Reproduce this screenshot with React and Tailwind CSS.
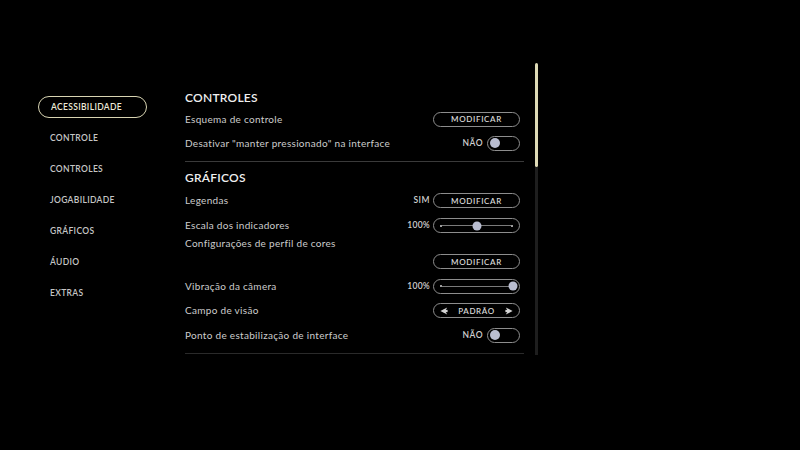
import React from "react";

const nav = ["ACESSIBILIDADE", "CONTROLE", "CONTROLES", "JOGABILIDADE", "GRÁFICOS", "ÁUDIO", "EXTRAS"];

function Pill({ children, className = "" }) {
  return (
    <div className={`flex h-[15px] w-[87px] items-center rounded-full border border-[#8d8d8d] ${className}`}>
      {children}
    </div>
  );
}

function Button({ label }) {
  return (
    <Pill className="justify-center">
      <span className="text-[8px] font-semibold tracking-[0.08em] text-[#d6d6d6]">{label}</span>
    </Pill>
  );
}

function Toggle({ label }) {
  return (
    <div className="flex items-center gap-[4px]">
      <span className="text-[8.5px] font-semibold tracking-[0.06em] text-[#cfcfcf]">{label}</span>
      <div className="flex h-[15px] w-[33px] items-center rounded-full border border-[#8d8d8d] pl-[2px]">
        <div className="h-[10px] w-[10px] rounded-full bg-[#b9bdd0]" />
      </div>
    </div>
  );
}

function Slider({ value }) {
  return (
    <div className="flex items-center gap-[3px]">
      <span className="text-[8.5px] font-semibold tracking-[0.03em] text-[#cfcfcf]">100%</span>
      <Pill className="px-[6px]">
        <div className="relative flex h-full flex-1 items-center">
          <div className="h-[2px] w-[2px] rounded-full bg-[#cfcfcf]" />
          <div className="h-px flex-1 bg-[#7a7a7a]" />
          {value < 100 && <div className="h-[2px] w-[2px] rounded-full bg-[#cfcfcf]" />}
          <div
            className="absolute top-1/2 h-[9px] w-[9px] -translate-x-1/2 -translate-y-1/2 rounded-full bg-[#b9bdd0]"
            style={{ left: `${value}%` }}
          />
        </div>
      </Pill>
    </div>
  );
}

// chunky concave arrowhead, as in the picker
function Arrow({ flip }) {
  return (
    <svg width="8" height="8" viewBox="0 0 10 10" className={flip ? "-scale-x-100" : ""}>
      <path d="M0.5 5 L9 0.5 L6.5 5 L9 9.5 Z" fill="#d4d4d4" />
      <path d="M4 3.6 H9.5 V6.4 H4 Z" fill="#d4d4d4" />
    </svg>
  );
}

function Selector({ label }) {
  return (
    <Pill className="justify-between px-[6px]">
      <Arrow />
      <span className="text-[8px] font-semibold tracking-[0.08em] text-[#d6d6d6]">{label}</span>
      <Arrow flip />
    </Pill>
  );
}

function Row({ label, h = "h-[24px]", children }) {
  return (
    <div className={`flex items-center justify-between pr-[4px] ${h}`}>
      <span className="text-[10px] tracking-[0.03em] text-[#cdcdcd]">{label}</span>
      {children}
    </div>
  );
}

function Heading({ children, pad = "" }) {
  return (
    <div className={`flex h-[20px] items-center ${pad}`}>
      <h2 className="text-[12px] font-semibold tracking-[0.02em] text-[#f0f0f0]">{children}</h2>
    </div>
  );
}

export default function App() {
  return (
    <div
      className="flex h-[450px] w-[800px] bg-black"
      style={{ fontFamily: "Lato, 'Noto Sans', sans-serif" }}
    >
      <nav className="ml-[38px] mt-[96px] flex w-[109px] flex-col gap-[9px]">
        {nav.map((n, i) => (
          <div
            key={n}
            className={`flex h-[22px] items-center rounded-full pl-[12px] text-[8.5px] font-semibold tracking-[0.04em] ${
              i === 0 ? "border border-[#d8d4b2] text-[#ecead8]" : "text-[#c6c6c6]"
            }`}
          >
            {n}
          </div>
        ))}
      </nav>

      <main className="ml-[38px] mt-[87px] flex w-[339px] flex-col">
        <Heading pad="pt-[1px]">CONTROLES</Heading>
        <Row label="Esquema de controle">
          <Button label="MODIFICAR" />
        </Row>
        <Row label={'Desativar "manter pressionado" na interface'}>
          <Toggle label="NÃO" />
        </Row>
        <div className="mb-[6px] mt-[6px] border-t border-[#3a3a3a]" />

        <Heading>GRÁFICOS</Heading>
        <Row label="Legendas" h="h-[25px]">
          <div className="flex items-center gap-[3px]">
            <span className="text-[8.5px] font-semibold tracking-[0.06em] text-[#cfcfcf]">SIM</span>
            <Button label="MODIFICAR" />
          </div>
        </Row>
        <Row label="Escala dos indicadores" h="h-[25px]">
          <Slider value={50} />
        </Row>
        <Row label="Configurações de perfil de cores" h="h-[11px]" />
        <Row label="" h="h-[25px]">
          <Button label="MODIFICAR" />
        </Row>
        <Row label="Vibração da câmera">
          <Slider value={100} />
        </Row>
        <Row label="Campo de visão" h="h-[25px]">
          <Selector label="PADRÃO" />
        </Row>
        <Row label="Ponto de estabilização de interface">
          <Toggle label="NÃO" />
        </Row>
        <div className="mt-[6px] border-t border-[#2a2a2a]" />
      </main>

      <div className="ml-[11px] mt-[63px] flex h-[292px] w-[3px] flex-col">
        <div className="h-[104px] rounded-full bg-[#dedab6]" />
        <div className="flex-1 bg-[#1e1e1e]" />
      </div>
    </div>
  );
}
